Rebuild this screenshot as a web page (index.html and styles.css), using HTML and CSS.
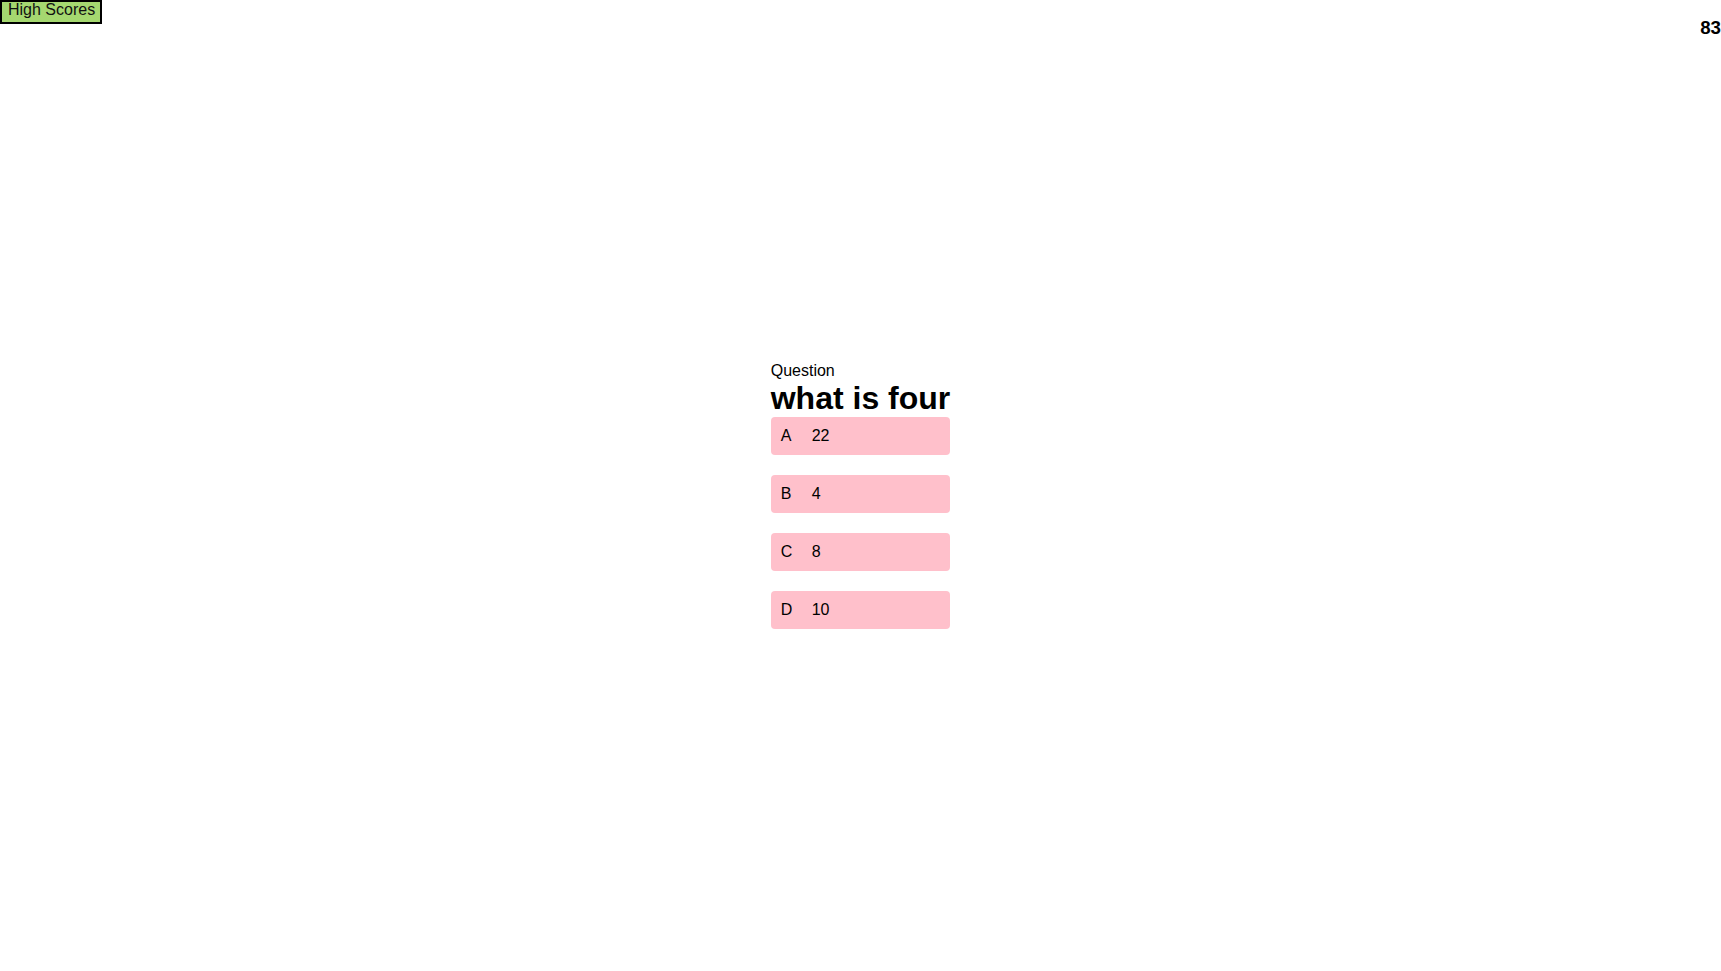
FILE: index.html
```html
<!DOCTYPE html>
<html>
<head>
<meta charset="utf-8">
<link rel="stylesheet" href="styles.css">
<title>Quiz</title>
</head>
<body>
<header class="topbar">
  <button class="scores-btn">High Scores</button>
  <div class="timer">83</div>
</header>
<main class="stage">
  <section class="quiz">
    <div class="label">Question</div>
    <h1 class="question">what is four</h1>
    <div class="answers">
      <div class="answer"><span class="key">A</span><span>22</span></div>
      <div class="answer"><span class="key">B</span><span>4</span></div>
      <div class="answer"><span class="key">C</span><span>8</span></div>
      <div class="answer"><span class="key">D</span><span>10</span></div>
    </div>
  </section>
</main>
</body>
</html>
```
FILE: styles.css
```css
html, body {
  margin: 0;
  padding: 0;
  background: #ffffff;
}
body {
  font-family: "Liberation Sans", Arial, sans-serif;
  color: #000;
}
.topbar {
  display: flex;
  justify-content: space-between;
  align-items: flex-start;
}
.scores-btn {
  font-family: "Liberation Sans", Arial, sans-serif;
  font-size: 16px;
  line-height: 16px;
  padding: 0 5px 4px 6px;
  margin: 0;
  background: #a5d870;
  color: #111;
  border: 2px solid #000;
  border-radius: 0;
  white-space: nowrap;
}
.timer {
  font-size: 18.72px;
  font-weight: bold;
  line-height: 22px;
  margin-top: 17px;
  padding-right: 0;
}
.stage {
  display: flex;
  justify-content: center;
  padding-top: 323px;
}
.quiz {
  display: flex;
  flex-direction: column;
}
.label {
  font-size: 16px;
  line-height: 18px;
}
.question {
  margin: 0;
  font-size: 32px;
  line-height: 36px;
  font-weight: bold;
  white-space: nowrap;
}
.answers {
  display: flex;
  flex-direction: column;
  gap: 20px;
  margin-top: 1px;
}
.answer {
  display: flex;
  align-items: center;
  height: 38px;
  padding-left: 10px;
  background: #ffc0cb;
  border-radius: 4px;
  font-size: 16px;
}
.key {
  display: inline-block;
  width: 31px;
}
```
